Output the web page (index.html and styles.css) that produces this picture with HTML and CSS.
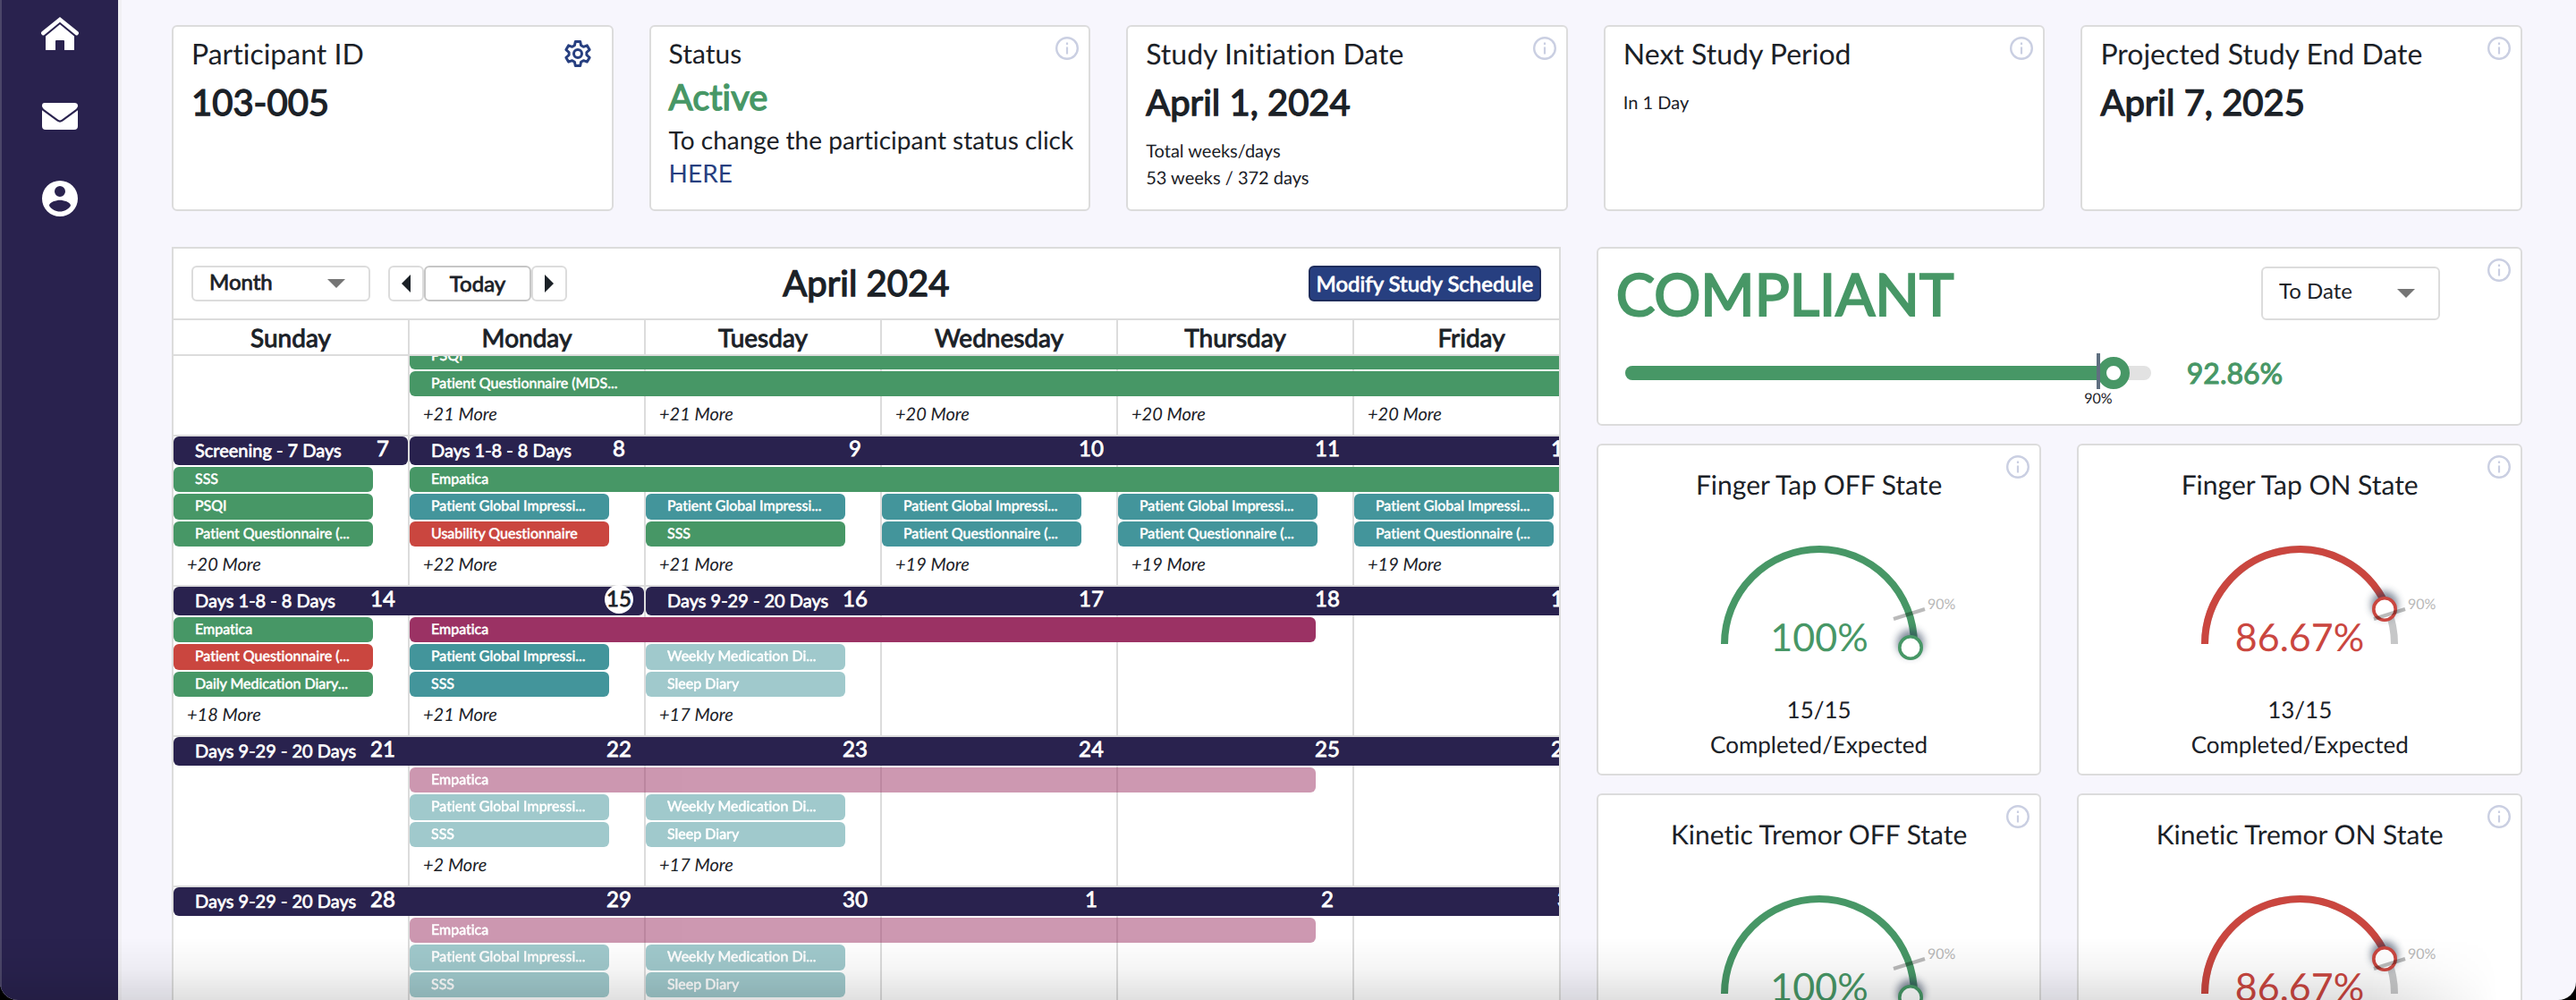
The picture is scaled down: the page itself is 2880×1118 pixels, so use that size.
FILE: index.html
```html
<!DOCTYPE html>
<html lang="en">
<head>
<meta charset="utf-8">
<title>Participant overview</title>
<link rel="stylesheet" href="styles.css">
</head>
<body>
<svg class="sprite" aria-hidden="true">
  <symbol id="info" viewBox="0 0 26 26">
    <circle cx="13" cy="13" r="11.8" fill="none" stroke="currentColor" stroke-width="2.4"/>
    <path d="M11.9 6.4h2.2v2.6h-2.2zM11.9 11.4h2.2v8.2h-2.2z" fill="currentColor"/>
  </symbol>
  <symbol id="marker" viewBox="-34 -34 68 68">
    <circle cy="-5" r="15" fill="#2b3a55" opacity="0.6" filter="url(#soft)"/>
    <circle r="12.2" fill="#fff" stroke="currentColor" stroke-width="3.6"/>
  </symbol>
  <symbol id="threshold" viewBox="0 0 120 40">
    <path d="M3 34 L38 23" stroke="#000" stroke-opacity="0.27" stroke-width="4" fill="none"/>
  </symbol>
  <filter id="soft" x="-100%" y="-100%" width="300%" height="300%"><feGaussianBlur stdDeviation="4"/></filter>
</svg>
<div class="app">
  <nav class="sidebar" aria-label="Main">
    <a href="#home" aria-label="Home"><svg viewBox="0 0 44 40"><path fill="#fff" d="M22 1 L42.5 17.5 Q43.6 18.6 42.8 19.9 L41.9 21 Q40.8 22.2 39.4 21 L22 6.8 L4.6 21 Q3.2 22.2 2.1 21 L1.2 19.9 Q.4 18.6 1.5 17.5 Z"/><path fill="#fff" d="M22 9.2 L38 22.4 V38 H27 V28 Q27 27 26 27 H18 Q17 27 17 28 V38 H6 V22.4 Z"/></svg></a>
    <a href="#messages" aria-label="Messages"><svg viewBox="0 0 44 40"><path fill="#fff" d="M5 5 H38 Q42 5 42 8.2 Q42 10.4 40 12 L24 23.8 Q22 25.2 20 23.8 L4 12 Q2 10.4 2 8.2 Q2 5 5 5 Z"/><path fill="#fff" d="M2 13.2 L18.8 25.6 Q22 27.8 25.2 25.6 L42 13.2 V31 Q42 35 38 35 H6 Q2 35 2 31 Z"/></svg></a>
    <a href="#account" aria-label="Account"><svg viewBox="0 0 44 40"><path fill="#fff" fill-rule="evenodd" d="M22 0 A20 20 0 1 0 22 40 A20 20 0 1 0 22 0 Z M22 6 A6 6 0 1 1 22 18 A6 6 0 1 1 22 6 Z M22 34.4 C17 34.4 12.600 31.800 10 27.880 C10.060 23.900 18 21.720 22 21.720 S33.940 23.900 34 27.880 C31.400 31.800 27 34.400 22 34.400 Z"/></svg></a>
  </nav>
  <main class="main">
    <section class="summary">
      <article class="card">
        <h2 class="card-title">Participant ID</h2>
        <p class="card-value">103-005</p>
        <button class="corner gear" aria-label="Settings"><svg viewBox="0 0 32 32"><path fill="none" stroke="currentColor" stroke-width="3" stroke-linejoin="round" d="M13.300 2.500h5.400l.9 4.200 2.700 1.600 4.100-1.400 2.700 4.700-3.200 2.900v3l3.200 2.900-2.700 4.700-4.100-1.400-2.700 1.600-.9 4.200h-5.400l-.9-4.200-2.700-1.600-4.100 1.400-2.700-4.700 3.200-2.900v-3l-3.200-2.900 2.700-4.700 4.100 1.400 2.700-1.600z"/><circle cx="16" cy="16" r="4.500" fill="none" stroke="currentColor" stroke-width="3"/></svg></button>
      </article>
      <article class="card">
        <h2 class="card-title status-title">Status</h2>
        <p class="card-value active">Active</p>
        <p class="card-text">To change the participant status click <a href="#status">HERE</a></p>
        <svg class="corner info" role="img" aria-label="Info"><use href="#info"/></svg>
      </article>
      <article class="card">
        <h2 class="card-title">Study Initiation Date</h2>
        <p class="card-value">April 1, 2024</p>
        <p class="card-note">Total weeks/days<br>53 weeks / 372 days</p>
        <svg class="corner info" role="img" aria-label="Info"><use href="#info"/></svg>
      </article>
      <article class="card">
        <h2 class="card-title">Next Study Period</h2>
        <p class="card-note">In 1 Day</p>
        <svg class="corner info" role="img" aria-label="Info"><use href="#info"/></svg>
      </article>
      <article class="card">
        <h2 class="card-title">Projected Study End Date</h2>
        <p class="card-value">April 7, 2025</p>
        <svg class="corner info" role="img" aria-label="Info"><use href="#info"/></svg>
      </article>
    </section>
    <div class="columns">
      <section class="calendar">
        <header class="toolbar">
          <div class="controls">
            <div class="select month"><select aria-label="Calendar view"><option>Month</option></select><svg viewBox="0 0 20 10"><path d="M0 0h20L10 10z"/></svg></div>
            <div class="pager">
              <button aria-label="Previous"><svg viewBox="0 0 10 20"><path d="M10 0v20L0 10z"/></svg></button>
              <button class="today">Today</button>
              <button aria-label="Next"><svg viewBox="0 0 10 20"><path d="M0 0v20l10-10z"/></svg></button>
            </div>
          </div>
          <h1>April 2024</h1>
          <button class="modify">Modify Study Schedule</button>
        </header>
        <div class="weekdays"><span>Sunday</span><span>Monday</span><span>Tuesday</span><span>Wednesday</span><span>Thursday</span><span>Friday</span><span>Saturday</span></div>
        <div class="weeks">
          <div class="weeks-inner">
            <div class="week">
              <i class="cell c1"></i><i class="cell c2"></i><i class="cell c3"></i><i class="cell c4"></i><i class="cell c5"></i><i class="cell c6"></i><i class="cell c7"></i>
              <div class="event r3 c2 to-end green">PSQI</div>
              <div class="event r4 c2 to-end green">Patient Questionnaire (MDS...</div>
              <a class="more c2" href="#more">+21 More</a><a class="more c3" href="#more">+21 More</a><a class="more c4" href="#more">+20 More</a><a class="more c5" href="#more">+20 More</a><a class="more c6" href="#more">+20 More</a>
            </div>
            <div class="week">
              <i class="cell c1"></i><i class="cell c2"></i><i class="cell c3"></i><i class="cell c4"></i><i class="cell c5"></i><i class="cell c6"></i><i class="cell c7"></i>
              <div class="phase c1">Screening - 7 Days</div><div class="phase c2 to-end">Days 1-8 - 8 Days</div>
              <span class="date c1">7</span><span class="date c2">8</span><span class="date c3">9</span><span class="date c4">10</span><span class="date c5">11</span><span class="date c6">12</span>
              <div class="event r2 c1 green">SSS</div><div class="event r3 c1 green">PSQI</div><div class="event r4 c1 green">Patient Questionnaire (...</div>
              <div class="event r2 c2 to-end green">Empatica</div>
              <div class="event r3 c2 teal">Patient Global Impressi...</div><div class="event r4 c2 red">Usability Questionnaire</div>
              <div class="event r3 c3 teal">Patient Global Impressi...</div><div class="event r4 c3 green">SSS</div>
              <div class="event r3 c4 teal">Patient Global Impressi...</div><div class="event r4 c4 teal">Patient Questionnaire (...</div>
              <div class="event r3 c5 teal">Patient Global Impressi...</div><div class="event r4 c5 teal">Patient Questionnaire (...</div>
              <div class="event r3 c6 teal">Patient Global Impressi...</div><div class="event r4 c6 teal">Patient Questionnaire (...</div>
              <a class="more c1" href="#more">+20 More</a><a class="more c2" href="#more">+22 More</a><a class="more c3" href="#more">+21 More</a><a class="more c4" href="#more">+19 More</a><a class="more c5" href="#more">+19 More</a><a class="more c6" href="#more">+19 More</a>
            </div>
            <div class="week">
              <i class="cell c1"></i><i class="cell c2"></i><i class="cell c3"></i><i class="cell c4"></i><i class="cell c5"></i><i class="cell c6"></i><i class="cell c7"></i>
              <div class="phase c1 two-days">Days 1-8 - 8 Days</div><div class="phase c3 to-end">Days 9-29 - 20 Days</div>
              <span class="date c1">14</span><span class="date c2 current">15</span><span class="date c3">16</span><span class="date c4">17</span><span class="date c5">18</span><span class="date c6">19</span>
              <div class="event r2 c1 green">Empatica</div><div class="event r3 c1 red">Patient Questionnaire (...</div><div class="event r4 c1 green">Daily Medication Diary...</div>
              <div class="event r2 c2 four-days plum">Empatica</div>
              <div class="event r3 c2 teal">Patient Global Impressi...</div><div class="event r4 c2 teal">SSS</div>
              <div class="event r3 c3 teal future">Weekly Medication Di...</div><div class="event r4 c3 teal future">Sleep Diary</div>
              <a class="more c1" href="#more">+18 More</a><a class="more c2" href="#more">+21 More</a><a class="more c3" href="#more">+17 More</a>
            </div>
            <div class="week">
              <i class="cell c1"></i><i class="cell c2"></i><i class="cell c3"></i><i class="cell c4"></i><i class="cell c5"></i><i class="cell c6"></i><i class="cell c7"></i>
              <div class="phase c1 to-end">Days 9-29 - 20 Days</div>
              <span class="date c1">21</span><span class="date c2">22</span><span class="date c3">23</span><span class="date c4">24</span><span class="date c5">25</span><span class="date c6">26</span>
              <div class="event r2 c2 four-days plum future">Empatica</div>
              <div class="event r3 c2 teal future">Patient Global Impressi...</div><div class="event r4 c2 teal future">SSS</div>
              <div class="event r3 c3 teal future">Weekly Medication Di...</div><div class="event r4 c3 teal future">Sleep Diary</div>
              <a class="more c2" href="#more">+2 More</a><a class="more c3" href="#more">+17 More</a>
            </div>
            <div class="week">
              <i class="cell c1"></i><i class="cell c2"></i><i class="cell c3"></i><i class="cell c4"></i><i class="cell c5"></i><i class="cell c6"></i><i class="cell c7"></i>
              <div class="phase c1 to-end">Days 9-29 - 20 Days</div>
              <span class="date c1">28</span><span class="date c2">29</span><span class="date c3">30</span><span class="date c4">1</span><span class="date c5">2</span><span class="date c6">3</span>
              <div class="event r2 c2 four-days plum future">Empatica</div>
              <div class="event r3 c2 teal future">Patient Global Impressi...</div><div class="event r4 c2 teal future">SSS</div>
              <div class="event r3 c3 teal future">Weekly Medication Di...</div><div class="event r4 c3 teal future">Sleep Diary</div>
            </div>
          </div>
        </div>
      </section>
      <section class="compliance">
        <article class="card overall">
          <div class="overall-head">
            <h2>COMPLIANT</h2>
            <div class="select range"><select aria-label="Compliance range"><option>To Date</option></select><svg viewBox="0 0 20 10"><path d="M0 0h20L10 10z"/></svg></div>
          </div>
          <div class="overall-bar">
            <div class="track">
              <div class="fill" style="width: 92.86%"></div>
              <span class="thumb" style="left: 92.86%"></span>
              <span class="tick" style="left: 90%"></span>
              <span class="tick-label" style="left: 90%">90%</span>
            </div>
            <strong>92.86%</strong>
          </div>
          <svg class="corner info" role="img" aria-label="Info"><use href="#info"/></svg>
        </article>
        <div class="gauges">
          <article class="card gauge ok">
            <h3>Finger Tap OFF State</h3>
            <svg viewBox="0 0 320 200">
              <path class="arc" d="M54 160 A106 106 0 0 1 266 160"/>
              <use href="#marker" x="228" y="130" width="68" height="68"/>
              <use href="#threshold" x="240" y="98" width="120" height="40"/>
              <text class="pct" x="160" y="168">100%</text><text class="limit" x="281" y="121">90%</text>
            </svg>
            <p>15/15<br>Completed/Expected</p>
            <svg class="corner info" role="img" aria-label="Info"><use href="#info"/></svg>
          </article>
          <article class="card gauge low">
            <h3>Finger Tap ON State</h3>
            <svg viewBox="0 0 320 200">
              <path class="rest" d="M54 160 A106 106 0 0 1 266 160"/>
              <path class="arc" d="M54 160 A106 106 0 0 1 256.800 117"/>
              <use href="#marker" x="221" y="87" width="68" height="68"/>
              <use href="#threshold" x="240" y="98" width="120" height="40"/>
              <text class="pct" x="160" y="168">86.67%</text><text class="limit" x="281" y="121">90%</text>
            </svg>
            <p>13/15<br>Completed/Expected</p>
            <svg class="corner info" role="img" aria-label="Info"><use href="#info"/></svg>
          </article>
          <article class="card gauge ok">
            <h3>Kinetic Tremor OFF State</h3>
            <svg viewBox="0 0 320 200">
              <path class="arc" d="M54 160 A106 106 0 0 1 266 160"/>
              <use href="#marker" x="228" y="130" width="68" height="68"/>
              <use href="#threshold" x="240" y="98" width="120" height="40"/>
              <text class="pct" x="160" y="168">100%</text><text class="limit" x="281" y="121">90%</text>
            </svg>
            <svg class="corner info" role="img" aria-label="Info"><use href="#info"/></svg>
          </article>
          <article class="card gauge low">
            <h3>Kinetic Tremor ON State</h3>
            <svg viewBox="0 0 320 200">
              <path class="rest" d="M54 160 A106 106 0 0 1 266 160"/>
              <path class="arc" d="M54 160 A106 106 0 0 1 256.800 117"/>
              <use href="#marker" x="221" y="87" width="68" height="68"/>
              <use href="#threshold" x="240" y="98" width="120" height="40"/>
              <text class="pct" x="160" y="168">86.67%</text><text class="limit" x="281" y="121">90%</text>
            </svg>
            <svg class="corner info" role="img" aria-label="Info"><use href="#info"/></svg>
          </article>
        </div>
      </section>
    </div>
  </main>
  <div class="fade"></div>
</div>
</body>
</html>
```
FILE: styles.css
```css
:root {
  --navy: #29224e;
  --blue: #273f80;
  --ink: #1b2127;
  --line: #dcdcdc;
  --green: #479766;
  --red: #ca463f;
  --teal: #43959b;
  --plum: #9b3264;
}

* { box-sizing: border-box; }

html { background: #000; }

body {
  margin: 0;
  color: var(--ink);
  font-family: Lato, "Liberation Sans", sans-serif;
  font-size: 24px;
  font-variant-ligatures: no-common-ligatures;
  text-rendering: geometricPrecision;
}

h1, h2, h3, p { margin: 0; font-weight: 400; }
a { color: inherit; text-decoration: none; }
button, select { font: inherit; color: inherit; }

/* Medium emphasis: regular letters with a thin outline */
.card-value, .toolbar h1, .month select, .pager .today, .modify, .weekdays,
.phase, .date, .event, .overall h2, .overall-bar strong {
  font-weight: 400;
  -webkit-text-stroke: 0.034em currentColor;
}

.sprite { position: absolute; width: 0; height: 0; }

.app {
  position: relative;
  display: flex;
  height: 100vh;
  overflow: hidden;
  background: #f7f6fd;
  border-radius: 0 0 20px 20px;
}

/* Sidebar */
.sidebar {
  flex: none;
  width: 132px;
  padding-top: 18px;
  background: var(--navy);
  border-left: 2px solid #4b4669;
  display: flex;
  flex-direction: column;
  align-items: center;
  gap: 52px;
}
.sidebar a, .sidebar svg { display: block; width: 44px; height: 40px; }

/* Shared cards */
.main {
  flex: 1;
  min-width: 0;
  padding: 28px 60px 0 56px;
  border-left: 4px solid #f1f0f4;
  display: flex;
  flex-direction: column;
  gap: 40px;
}
.card {
  position: relative;
  background: #fff;
  border: 2px solid var(--line);
  border-radius: 6px;
}
.corner { position: absolute; top: 11px; right: 11px; }
.info { width: 26px; height: 26px; color: #cacfe2; }

/* Summary row */
.summary {
  display: grid;
  grid-template-columns: repeat(5, minmax(0, 1fr));
  gap: 40px;
}
.summary .card { min-height: 208px; padding: 10px 12px 0 20px; }
.gear {
  top: 14px;
  right: 22px;
  width: 32px;
  height: 32px;
  padding: 0;
  border: 0;
  background: none;
  color: var(--blue);
}
.gear svg { display: block; }
.card-title { font-size: 32px; line-height: 40px; }
.card-value { margin-top: 10px; font-size: 40px; line-height: 48px; }
.status-title { font-size: 30px; }
.card-value.active { margin-top: 4px; color: var(--green); }
.card-text { margin-top: 6px; font-size: 28px; line-height: 37px; }
.card-text a { color: var(--blue); }
.card-note { margin-top: 16px; font-size: 20px; line-height: 30px; }
.card-title + .card-note { margin-top: 20px; }

.columns {
  display: grid;
  grid-template-columns: minmax(0, 3fr) minmax(0, 2fr);
  gap: 40px;
  align-items: start;
}

/* Calendar */
.calendar { background: #fff; border: 2px solid var(--line); overflow: hidden; }
.toolbar {
  display: grid;
  grid-template-columns: 1fr auto 1fr;
  align-items: center;
  height: 80px;
  padding: 0 20px;
  border-bottom: 2px solid var(--line);
}
.toolbar h1 { padding-bottom: 2px; font-size: 40px; line-height: 48px; }
.controls { display: flex; gap: 20px; }
.select { display: grid; align-items: center; }
.select select {
  grid-area: 1 / 1;
  appearance: none;
  width: 100%;
  padding: 0 20px 8px 18px;
  border: 2px solid var(--line);
  border-radius: 6px;
  background: #fff;
}
.select svg {
  grid-area: 1 / 1;
  justify-self: end;
  width: 20px;
  height: 10px;
  margin-right: 28px;
  fill: #757575;
  pointer-events: none;
}
.month { width: 200px; }
.month select { height: 40px; padding-bottom: 6px; }
.pager { display: flex; }
.pager button {
  display: grid;
  place-items: center;
  width: 40px;
  height: 40px;
  padding: 0;
  border: 2px solid var(--line);
  border-radius: 6px;
  background: #fff;
}
.pager .today { width: 120px; padding-bottom: 2px; border-color: #c6c6c6; }
.pager svg { width: 10px; height: 20px; fill: var(--ink); }
.modify {
  justify-self: end;
  width: 260px;
  height: 40px;
  padding: 0 0 2px;
  border: 2px solid #1f2d5c;
  border-radius: 6px;
  background: var(--blue);
  color: #fff;
}
.weekdays {
  display: grid;
  grid-template-columns: repeat(7, 264px);
  border-bottom: 2px solid var(--line);
  font-size: 28px;
  line-height: 38px;
  text-align: center;
}
.weekdays span { border-right: 2px solid var(--line); }
.weeks { overflow: hidden; }
.weeks-inner { margin-top: -78px; }
.week {
  display: grid;
  grid-template-columns: repeat(7, 264px);
  grid-template-rows: 32px 28px 29px 28px 1fr;
  row-gap: 2px;
  height: 168px;
  border-bottom: 2px solid var(--line);
}
.cell { grid-row: 1 / -1; border-right: 2px solid var(--line); }
.c1 { grid-column: 1; }
.c2 { grid-column: 2; }
.c3 { grid-column: 3; }
.c4 { grid-column: 4; }
.c5 { grid-column: 5; }
.c6 { grid-column: 6; }
.c7 { grid-column: 7; }
.r2 { grid-row: 2; }
.r3 { grid-row: 3; }
.r4 { grid-row: 4; }
.phase {
  grid-row: 1;
  margin-right: 2px;
  padding-left: 24px;
  border-radius: 6px;
  background: var(--navy);
  color: #fff;
  font-size: 20px;
  line-height: 32px;
  white-space: nowrap;
}
.date {
  grid-row: 1;
  justify-self: end;
  width: 32px;
  height: 32px;
  margin: -2px 14px 0 0;
  border-radius: 50%;
  color: #fff;
  line-height: 32px;
  text-align: center;
}
.date.current { background: #fff; color: var(--ink); }
.event {
  margin-right: 41px;
  padding-left: 24px;
  border-radius: 6px;
  color: #fff;
  font-size: 16px;
  line-height: 28px;
  white-space: nowrap;
}
.to-end { grid-column-end: 8; margin-right: 0; }
.two-days { grid-column-end: span 2; }
.four-days { grid-column-end: span 4; margin-right: 43px; }
.green { background: var(--green); }
.red { background: var(--red); }
.teal { background: var(--teal); }
.plum { background: var(--plum); }
.future { opacity: 0.5; }
.more {
  grid-row: 5;
  padding: 0 15px;
  font-size: 20px;
  line-height: 36px;
  font-style: italic;
}

/* Compliance */
.compliance { display: flex; flex-direction: column; gap: 20px; }
.overall { min-height: 200px; padding: 20px 90px 0 20px; color: var(--green); }
.overall-head { display: flex; justify-content: space-between; align-items: flex-start; }
.overall h2 { font-size: 65px; line-height: 60px; }
.range { width: 200px; color: var(--ink); }
.range select { height: 60px; }
.overall-bar { display: flex; align-items: center; gap: 40px; margin: 39px 0 0 10px; }
.overall-bar strong { font-size: 32px; line-height: 40px; }
.track { position: relative; flex: 0 1 588px; height: 16px; border-radius: 8px; background: #e2e2e2; }
.fill { height: 16px; border-radius: 8px; background: var(--green); }
.tick {
  position: absolute;
  top: -14px;
  width: 4px;
  height: 40px;
  margin-left: -2px;
  background: #5f6f80;
}
.tick-label {
  position: absolute;
  top: 27px;
  width: 40px;
  margin-left: -20px;
  color: var(--ink);
  font-size: 16px;
  line-height: 20px;
  text-align: center;
}
.thumb {
  position: absolute;
  top: -10px;
  width: 36px;
  height: 36px;
  margin-left: -18px;
  border: 10px solid var(--green);
  border-radius: 50%;
  background: #fff;
}

/* Gauges */
.gauges {
  display: grid;
  grid-template-columns: repeat(2, minmax(0, 1fr));
  gap: 20px 40px;
}
.gauge {
  display: flex;
  flex-direction: column;
  align-items: center;
  min-height: 371px;
  padding-top: 26px;
  text-align: center;
}
.gauge h3 { font-size: 30px; line-height: 36px; }
.gauge > svg:not(.corner) { width: 320px; height: 200px; overflow: visible; }
.gauge p { margin-top: 14px; font-size: 26px; line-height: 39px; }
.ok { --tone: var(--green); }
.low { --tone: var(--red); }
.gauge use { color: var(--tone); }
.gauge .corner use { color: #cacfe2; }
.arc, .rest { fill: none; stroke: var(--tone); stroke-width: 8; }
.rest { stroke: #c6c7c8; }
.pct { fill: var(--tone); font-size: 43px; text-anchor: middle; }
.limit { fill: #b8b8b8; font-size: 16px; }

.fade {
  position: absolute;
  right: 0;
  bottom: 0;
  left: 0;
  height: 70px;
  background: linear-gradient(rgba(0, 0, 0, 0), rgba(0, 0, 0, 0.04) 50%, rgba(0, 0, 0, 0.12));
  -webkit-mask-image: linear-gradient(to right, #000 92%, transparent 97%);
  mask-image: linear-gradient(to right, #000 92%, transparent 97%);
  pointer-events: none;
}
```
